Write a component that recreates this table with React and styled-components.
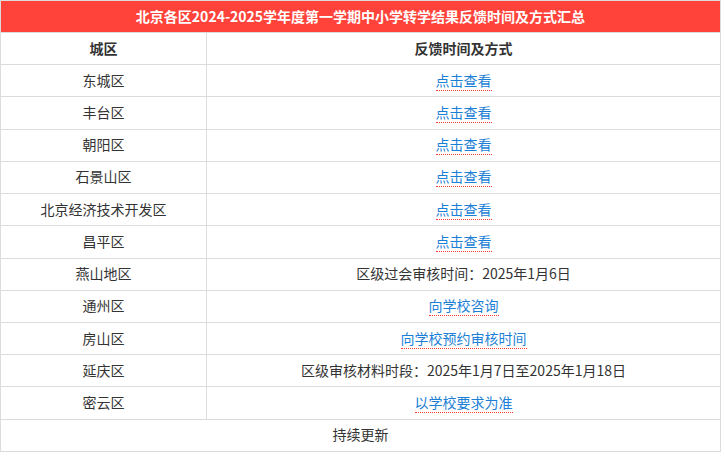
import React from "react";
import styled, { createGlobalStyle } from "styled-components";

const Global = createGlobalStyle`
  html, body { margin: 0; padding: 0; background: #fff; }
  body { font-family: "Microsoft YaHei", "Noto Sans CJK SC", "Noto Sans", sans-serif; }
`;

const Table = styled.table`
  width: 721px;
  border-collapse: collapse;
  font-size: 14px;
  color: #333;
  table-layout: fixed;
`;

const TitleCell = styled.td`
  background: #ff433a;
  color: #fff;
  font-weight: bold;
  text-align: center;
  height: 29px;
  padding: 0 0 2px;
  border: 1px solid #dcdcdc;
  line-height: 20px;
`;

const Cell = styled.td`
  border: 1px solid #dcdcdc;
  text-align: center;
  padding: 0 0 2px;
  height: 29.23px;
  line-height: 20px;
  font-weight: ${(p) => (p.$head ? "bold" : "normal")};
`;

const Link = styled.a`
  color: #1c7fd6;
  text-decoration: none;
  border-bottom: 1px dotted #ff3b30;
  padding-bottom: 0;
`;

const rows = [
  ["东城区", "点击查看", true],
  ["丰台区", "点击查看", true],
  ["朝阳区", "点击查看", true],
  ["石景山区", "点击查看", true],
  ["北京经济技术开发区", "点击查看", true],
  ["昌平区", "点击查看", true],
  ["燕山地区", "区级过会审核时间：2025年1月6日", false],
  ["通州区", "向学校咨询", true],
  ["房山区", "向学校预约审核时间", true],
  ["延庆区", "区级审核材料时段：2025年1月7日至2025年1月18日", false],
  ["密云区", "以学校要求为准", true],
];

export default function App() {
  return (
    <>
      <Global />
      <Table>
        <colgroup>
          <col style={{ width: 206 }} />
          <col />
        </colgroup>
        <tbody>
          <tr>
            <TitleCell colSpan={2}>北京各区2024-2025学年度第一学期中小学转学结果反馈时间及方式汇总</TitleCell>
          </tr>
          <tr>
            <Cell $head>城区</Cell>
            <Cell $head>反馈时间及方式</Cell>
          </tr>
          {rows.map(([a, b, link]) => (
            <tr key={a}>
              <Cell>{a}</Cell>
              <Cell>{link ? <Link href="#">{b}</Link> : b}</Cell>
            </tr>
          ))}
          <tr>
            <Cell colSpan={2}>持续更新</Cell>
          </tr>
        </tbody>
      </Table>
    </>
  );
}
